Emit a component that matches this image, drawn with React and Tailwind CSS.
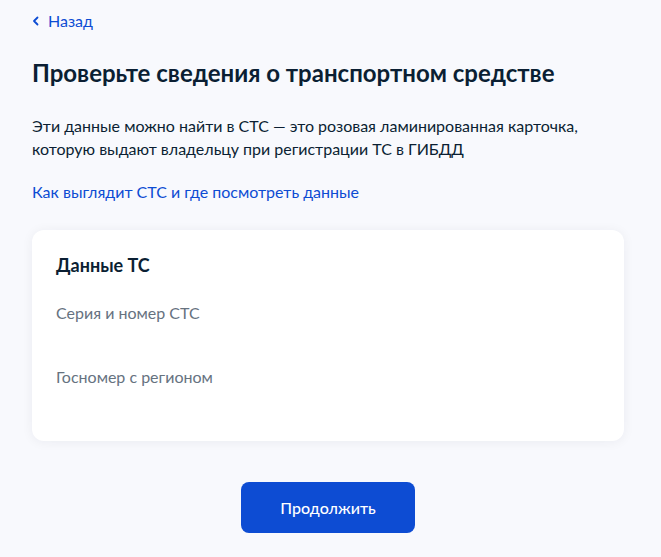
import React from 'react';

export default function App() {
    return (
        <div className="min-h-[557px] bg-[#f8f9fd] font-['Lato','Liberation_Sans',sans-serif] text-[#0b1f33]">
            <div className="w-[592px] ml-8 pt-[11px] pb-6">
                {/* Back link */}
                <a href="#" className="flex items-center gap-[9px] text-[16px] leading-[20px] text-[#0d4cd3]">
                    <svg width="7" height="10" viewBox="0 0 7 10" fill="none">
                        <path d="M5.5 1.5L2 5l3.5 3.5" stroke="#0d4cd3" strokeWidth="1.8" strokeLinecap="round" strokeLinejoin="round" />
                    </svg>
                    Назад
                </a>

                <h1 className="mt-[26px] text-[24px] leading-[32px] font-bold">
                    Проверьте сведения о транспортном средстве
                </h1>

                <p className="mt-[25px] text-[16px] leading-[23px]">
                    Эти данные можно найти в СТС — это розовая ламинированная карточка,
                    <br />
                    которую выдают владельцу при регистрации ТС в ГИБДД
                </p>

                <a href="#" className="block mt-[20px] text-[16px] leading-[23px] text-[#0d4cd3]">
                    Как выглядит СТС и где посмотреть данные
                </a>

                {/* Card */}
                <div className="mt-[27px] h-[211px] rounded-xl bg-white shadow-[0_1px_12px_rgba(11,31,51,0.06)] px-6 pt-[23px]">
                    <div className="text-[18px] leading-[24px] font-bold">Данные ТС</div>
                    <div className="mt-[26px] text-[16px] leading-[20px] text-[#66727f]">Серия и номер СТС</div>
                    <div className="mt-[44px] text-[16px] leading-[20px] text-[#66727f]">Госномер с регионом</div>
                </div>

                <div className="flex justify-center mt-[41px]">
                    <button className="w-[174px] h-[51px] rounded-lg bg-[#0d4cd3] text-white text-[16px] font-medium">
                        Продолжить
                    </button>
                </div>
            </div>
        </div>
    );
}
